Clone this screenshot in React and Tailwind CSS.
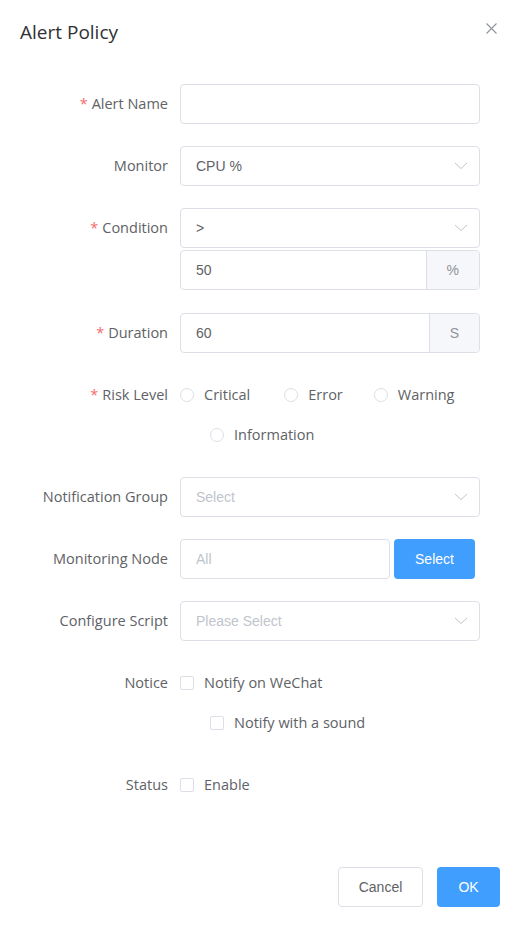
import React from "react";

const labelFont = "font-['Open_Sans','Noto_Sans',sans-serif]";
const inputFont = "font-['Liberation_Sans',Arial,sans-serif]";

function Chevron() {
  return (
    <svg width="14" height="8" viewBox="0 0 14 8" className="mr-[11px] shrink-0">
      <path d="M1 1 L7 6.5 L13 1" fill="none" stroke="#c0c4cc" strokeWidth="1" />
    </svg>
  );
}

function Label({ text, required }) {
  return (
    <div className={`w-[160px] shrink-0 pr-3 text-right text-[14.5px] leading-10 text-[#606266] ${labelFont}`}>
      {required && <span className="mr-1 text-[#f56c6c]">*</span>}
      {text}
    </div>
  );
}

function Item({ label, required, children, mb = "mb-[22px]" }) {
  return (
    <div className={`flex ${mb}`}>
      <Label text={label} required={required} />
      <div className="w-[300px]">{children}</div>
    </div>
  );
}

function TextInput({ value, placeholder }) {
  return (
    <div className={`flex h-10 items-center rounded border border-[#dcdfe6] bg-white px-[15px] text-[14px] ${inputFont}`}>
      {value ? <span className="text-[#606266]">{value}</span> : <span className="text-[#c0c4cc]">{placeholder}</span>}
    </div>
  );
}

function SelectBox({ value, placeholder }) {
  return (
    <div className={`flex h-10 items-center justify-between rounded border border-[#dcdfe6] bg-white pl-[15px] text-[14px] ${inputFont}`}>
      {value ? <span className="text-[#606266]">{value}</span> : <span className="text-[#c0c4cc]">{placeholder}</span>}
      <Chevron />
    </div>
  );
}

function AppendInput({ value, append }) {
  return (
    <div className={`flex h-10 rounded border border-[#dcdfe6] text-[14px] ${inputFont}`}>
      <div className="flex flex-1 items-center px-[15px] text-[#606266]">{value}</div>
      <div className="flex items-center rounded-r border-l border-[#dcdfe6] bg-[#f5f7fa] px-5 text-[#909399]">{append}</div>
    </div>
  );
}

function Radio({ text, className = "" }) {
  return (
    <div className={`flex items-center ${className}`}>
      <span className="h-[14px] w-[14px] rounded-full border border-[#dcdfe6] bg-white" />
      <span className={`ml-[10px] text-[14.5px] leading-5 text-[#606266] ${labelFont}`}>{text}</span>
    </div>
  );
}

function Check({ text, className = "" }) {
  return (
    <div className={`flex items-center ${className}`}>
      <span className="h-[14px] w-[14px] rounded-[2px] border border-[#dcdfe6] bg-white" />
      <span className={`ml-[10px] text-[14.5px] leading-5 text-[#606266] ${labelFont}`}>{text}</span>
    </div>
  );
}

export default function App() {
  return (
    <div className="h-[925px] w-[520px] overflow-hidden bg-white">
      <div className="flex items-start justify-between px-5 pb-[10px] pt-5">
        <div className={`text-[19px] leading-6 text-[#303133] ${labelFont}`}>Alert Policy</div>
        <svg width="11" height="11" viewBox="0 0 11 11" className="mr-[3px] mt-[3px]">
          <path d="M0.5 0.5 L10.5 10.5 M10.5 0.5 L0.5 10.5" stroke="#909399" strokeWidth="1.1" />
        </svg>
      </div>

      <div className="px-5 pb-[30px] pt-[30px]">
        <Item label="Alert Name" required>
          <TextInput />
        </Item>
        <Item label="Monitor">
          <SelectBox value="CPU %" />
        </Item>
        <Item label="Condition" required mb="mb-[23px]">
          <SelectBox value=">" />
          <div className="mt-[2px]">
            <AppendInput value="50" append="%" />
          </div>
        </Item>
        <Item label="Duration" required>
          <AppendInput value="60" append="S" />
        </Item>
        <Item label="Risk Level" required>
          <div className="flex h-10 items-center">
            <Radio text="Critical" className="mr-[34px]" />
            <Radio text="Error" className="mr-[31px]" />
            <Radio text="Warning" />
          </div>
          <div className="flex h-10 items-center pl-[30px]">
            <Radio text="Information" />
          </div>
        </Item>
        <Item label="Notification Group">
          <SelectBox placeholder="Select" />
        </Item>
        <Item label="Monitoring Node">
          <div className="flex items-center">
            <div className="w-[210px]">
              <TextInput placeholder="All" />
            </div>
            <button className={`ml-1 h-10 w-[81px] rounded bg-[#409eff] text-[14px] text-white ${inputFont}`}>Select</button>
          </div>
        </Item>
        <Item label="Configure Script">
          <SelectBox placeholder="Please Select" />
        </Item>
        <Item label="Notice">
          <div className="flex h-10 items-center">
            <Check text="Notify on WeChat" />
          </div>
          <div className="flex h-10 items-center pl-[30px]">
            <Check text="Notify with a sound" />
          </div>
        </Item>
        <Item label="Status">
          <div className="flex h-10 items-center">
            <Check text="Enable" />
          </div>
        </Item>
      </div>

      <div className="flex justify-end gap-[14px] px-5 pb-5 pt-[10px]">
        <button className={`h-10 w-[85px] rounded border border-[#dcdfe6] bg-white text-[14px] text-[#606266] ${inputFont}`}>Cancel</button>
        <button className={`h-10 w-[63px] rounded bg-[#409eff] text-[14px] text-white ${inputFont}`}>OK</button>
      </div>
    </div>
  );
}
